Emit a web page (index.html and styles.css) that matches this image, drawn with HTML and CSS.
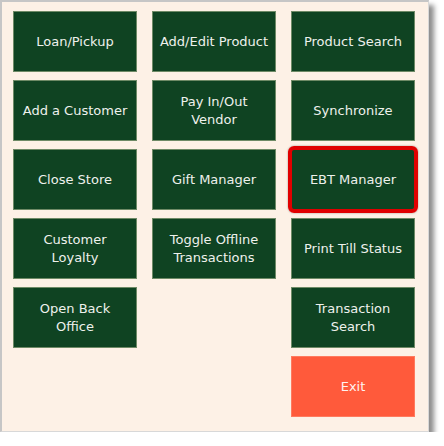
FILE: index.html
```html
<!DOCTYPE html>
<html>
<head>
<meta charset="utf-8">
<link rel="stylesheet" href="styles.css">
</head>
<body>
<div class="panel">
  <div class="col">
    <div class="btn">Loan/Pickup</div>
    <div class="btn">Add a Customer</div>
    <div class="btn">Close Store</div>
    <div class="btn">Customer<br>Loyalty</div>
    <div class="btn">Open Back<br>Office</div>
  </div>
  <div class="col">
    <div class="btn">Add/Edit Product</div>
    <div class="btn">Pay In/Out<br>Vendor</div>
    <div class="btn">Gift Manager</div>
    <div class="btn">Toggle Offline<br>Transactions</div>
  </div>
  <div class="col">
    <div class="btn">Product Search</div>
    <div class="btn">Synchronize</div>
    <div class="btn highlight">EBT Manager</div>
    <div class="btn">Print Till Status</div>
    <div class="btn">Transaction<br>Search</div>
    <div class="btn exit">Exit</div>
  </div>
</div>
</body>
</html>
```
FILE: styles.css
```css
html, body {
  margin: 0;
  padding: 0;
  background: #ffffff;
}
.panel {
  box-sizing: border-box;
  width: 429px;
  height: 432px;
  background: #fdf1e6;
  border: 2px solid #c6c6c6;
  border-right-width: 1px;
  border-bottom-width: 1px;
  border-right-color: #d8d8d8;
  border-bottom-color: #d8d8d8;
  box-shadow: 5px 5px 5px rgba(0, 0, 0, 0.45);
  padding: 9px 0 0 11px;
  display: flex;
  gap: 15px;
  align-items: flex-start;
}
.col {
  display: flex;
  flex-direction: column;
  gap: 8px;
  width: 124px;
}
.btn {
  box-sizing: border-box;
  height: 61px;
  background: #0f4322;
  border: 1px solid #6e8a66;
  color: #eef1ec;
  font-family: "DejaVu Sans", sans-serif;
  font-size: 13px;
  line-height: 18px;
  display: flex;
  align-items: center;
  justify-content: center;
  text-align: center;
  position: relative;
}
.highlight::after {
  content: "";
  position: absolute;
  inset: -4px;
  border: 4px solid #e00000;
  border-radius: 6px;
  box-shadow: 0 0 2px rgba(0,0,0,0.4);
}
.exit {
  background: #ff5a3b;
  border-color: #ff7a5e;
  color: #fff3f0;
}
```
